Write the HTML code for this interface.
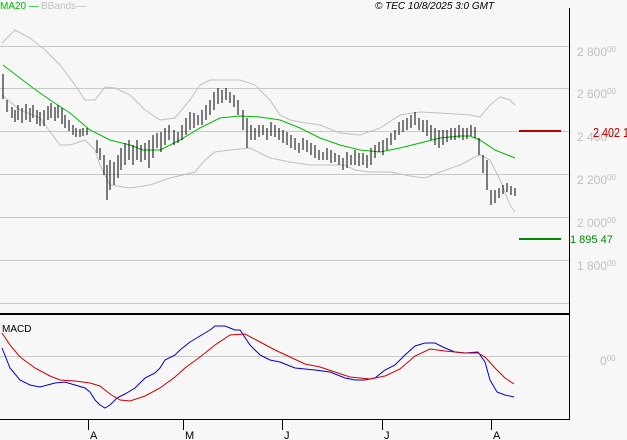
<!DOCTYPE html>
<html><head><meta charset="utf-8"><style>
html,body{margin:0;padding:0;background:#f7f7f7;width:627px;height:440px;overflow:hidden}
svg{display:block}
text{font-family:"Liberation Sans",sans-serif}
</style></head><body>
<svg width="627" height="440" viewBox="0 0 627 440" xmlns="http://www.w3.org/2000/svg">
<rect width="627" height="440" fill="#f7f7f7"/>
<g stroke="#c8c8c8" stroke-width="1">
<line x1="0" y1="46.5" x2="569" y2="46.5"/>
<line x1="0" y1="88.5" x2="569" y2="88.5"/>
<line x1="0" y1="131.5" x2="569" y2="131.5"/>
<line x1="0" y1="174.5" x2="569" y2="174.5"/>
<line x1="0" y1="217.5" x2="569" y2="217.5"/>
<line x1="0" y1="260.5" x2="569" y2="260.5"/>
<line x1="0" y1="303.5" x2="569" y2="303.5"/>
<line x1="0" y1="356.5" x2="569" y2="356.5"/>
</g>
<line x1="569.5" y1="8" x2="569.5" y2="420" stroke="#000"/>
<line x1="0" y1="314" x2="569" y2="314" stroke="#000" stroke-width="2"/>
<line x1="0" y1="419.5" x2="569" y2="419.5" stroke="#000"/>
<g stroke="#000" stroke-width="1">
<line x1="88.5" y1="419" x2="88.5" y2="430"/><line x1="183.5" y1="419" x2="183.5" y2="430"/>
<line x1="282.5" y1="419" x2="282.5" y2="430"/><line x1="382.5" y1="419" x2="382.5" y2="430"/>
<line x1="491.5" y1="419" x2="491.5" y2="430"/>
</g>
<g font-size="11" fill="#000">
<text x="90" y="439">A</text><text x="185" y="439">M</text><text x="284" y="439">J</text><text x="384" y="439">J</text><text x="493" y="439">A</text>
</g>
<g font-size="12" fill="#c0c0c0">
<text x="577" y="56">2 800<tspan font-size="8" dy="-4">00</tspan></text>
<text x="577" y="98">2 600<tspan font-size="8" dy="-4">00</tspan></text>
<text x="577" y="141">2 400<tspan font-size="8" dy="-4">00</tspan></text>
<text x="577" y="184">2 200<tspan font-size="8" dy="-4">00</tspan></text>
<text x="577" y="227">2 000<tspan font-size="8" dy="-4">00</tspan></text>
<text x="577" y="270">1 800<tspan font-size="8" dy="-4">00</tspan></text>
<text x="600" y="365">0<tspan font-size="8" dy="-4">00</tspan></text>
</g>
<line x1="519" y1="131" x2="561" y2="131" stroke="#c00000" stroke-width="2"/>
<text x="593" y="137" font-size="13" fill="#c00000" textLength="36" lengthAdjust="spacingAndGlyphs">2 402 1</text>
<line x1="519" y1="239" x2="561" y2="239" stroke="#008800" stroke-width="2"/>
<text x="570" y="243" font-size="11" fill="#008800">1 895 47</text>
<text x="0" y="9" font-size="10" fill="#00bb00">MA20 —</text>
<text x="41" y="9" font-size="10" fill="#c0c0c0">BBands—</text>
<text x="375" y="9" font-size="10" font-style="italic" fill="#000">© TEC 10/8/2025 3:0 GMT</text>
<text x="2" y="332" font-size="10" fill="#000">MACD</text>
<polyline fill="none" stroke="#c0c0c0" stroke-width="1" points="2,43 15,30 30,38 45,50 60,65 75,85 85,100 95,100 105,87 115,88 130,95 145,110 160,120 175,118 190,100 200,85 210,80 240,80 255,85 270,100 280,115 290,120 300,122 320,125 340,133 360,135 380,128 400,115 420,112 440,113 470,115 480,117 490,105 500,97 510,100 515,105"/>
<polyline fill="none" stroke="#c0c0c0" stroke-width="1" points="2,95 20,110 40,118 60,145 70,145 85,140 95,150 100,165 110,185 130,188 150,185 170,178 195,172 205,160 215,152 230,150 250,148 270,158 290,162 310,165 330,165 345,165 355,170 370,172 390,172 410,176 425,178 440,172 460,165 475,157 480,155 490,160 500,180 510,205 515,212"/>
<polyline fill="none" stroke="#00bb00" stroke-width="1" points="3,65 33,88 50,100 70,113 90,130 110,140 130,145 143,150 160,150 180,140 200,128 220,118 240,116 260,117 280,120 300,128 320,138 340,145 360,150 380,152 400,148 420,143 440,138 460,136 470,136 480,140 495,150 515,158"/>
<path fill="none" stroke="#000" stroke-width="1" d="M3,74V99M7,100V112M12,107V118M15,110V122M18,105V120M22,108V123M26,104V120M30,108V122M33,105V118M37,110V124M40,112V126M44,110V126M48,106V120M51,103V118M55,107V121M58,105V118M62,108V124M65,115V128M69,120V131M73,125V135M76,128V137M80,129V137M83,128V136M87,128V135M97,140V153M100,148V160M104,155V175M107,165V200M110,160V190M114,162V185M118,155V178M121,148V170M125,143V165M129,140V160M133,145V165M137,140V160M141,145V162M145,143V160M149,140V168M153,135V158M157,133V148M161,132V152M165,128V145M169,125V140M174,130V145M178,132V143M182,125V140M186,118V135M190,112V130M194,113V128M198,115V125M202,110V125M206,105V120M210,100V115M214,92V110M218,88V104M222,90V103M226,88V100M230,92V103M234,95V107M238,100V115M243,110V130M247,118V148M251,125V140M255,128V140M259,125V137M263,125V135M267,128V140M271,122V136M275,125V137M279,128V140M283,130V143M287,132V145M291,135V148M295,138V150M299,143V153M303,138V150M307,140V152M311,143V155M315,145V158M319,150V160M323,152V160M327,148V160M331,150V163M335,153V162M339,155V165M343,158V170M347,152V168M351,155V165M355,150V165M359,153V166M363,153V165M367,155V168M371,148V165M375,145V158M379,142V152M383,140V155M387,138V150M391,133V145M395,130V140M399,122V135M403,120V132M407,118V130M411,115V128M415,112V125M419,118V130M423,120V132M427,120V136M431,125V140M435,128V145M439,130V148M443,130V145M447,130V142M451,128V140M455,128V140M459,125V138M463,128V140M467,128V139M471,125V136M475,127V138M479,138V155M483,155V173M487,160V190M491,190V205M495,190V203M499,188V198M503,185V194M507,183V192M511,186V195M515,188V196"/>
<polyline fill="none" stroke="#0000cc" stroke-width="1" points="2,348 10,368 20,380 30,385 40,387 55,383 65,382 75,385 85,388 90,392 95,400 100,405 105,408 110,405 117,398 125,394 135,388 145,378 155,373 160,368 165,360 175,355 180,350 190,342 200,336 210,330 215,326 225,326 230,328 235,330 240,330 250,345 260,355 270,360 280,362 295,368 305,369 315,370 330,372 345,378 355,380 365,380 375,378 385,370 395,365 405,355 415,346 425,343 435,343 445,348 455,352 465,353 478,352 485,362 490,380 497,392 505,395 514,397"/>
<polyline fill="none" stroke="#cc0000" stroke-width="1" points="2,333 10,345 20,357 35,368 50,376 60,380 75,381 90,383 100,386 110,394 120,400 130,401 145,396 160,388 175,377 185,368 200,357 215,345 230,335 245,334 260,342 275,350 290,357 305,364 320,367 335,372 350,377 370,379 385,376 400,369 415,356 430,349 445,351 465,353 478,353 485,357 495,368 505,378 514,384"/>
</svg>
</body></html>
